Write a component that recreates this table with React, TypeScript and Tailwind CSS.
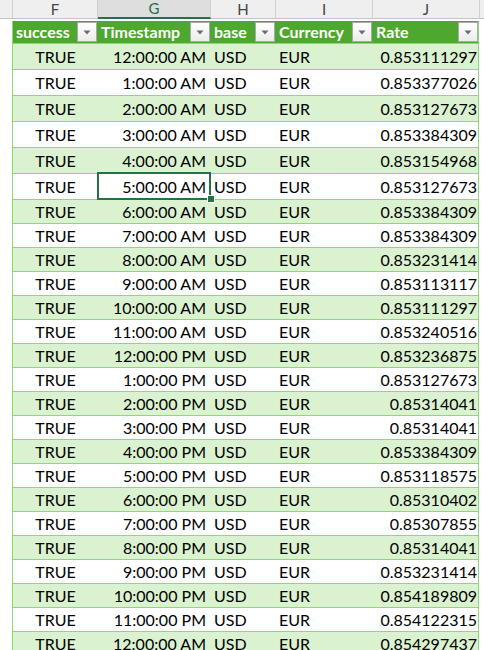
import React from "react";

const rows: [string, string][] = [
  ["12:00:00 AM", "0.853111297"],
  ["1:00:00 AM", "0.853377026"],
  ["2:00:00 AM", "0.853127673"],
  ["3:00:00 AM", "0.853384309"],
  ["4:00:00 AM", "0.853154968"],
  ["5:00:00 AM", "0.853127673"],
  ["6:00:00 AM", "0.853384309"],
  ["7:00:00 AM", "0.853384309"],
  ["8:00:00 AM", "0.853231414"],
  ["9:00:00 AM", "0.853113117"],
  ["10:00:00 AM", "0.853111297"],
  ["11:00:00 AM", "0.853240516"],
  ["12:00:00 PM", "0.853236875"],
  ["1:00:00 PM", "0.853127673"],
  ["2:00:00 PM", "0.85314041"],
  ["3:00:00 PM", "0.85314041"],
  ["4:00:00 PM", "0.853384309"],
  ["5:00:00 PM", "0.853118575"],
  ["6:00:00 PM", "0.85310402"],
  ["7:00:00 PM", "0.85307855"],
  ["8:00:00 PM", "0.85314041"],
  ["9:00:00 PM", "0.853231414"],
  ["10:00:00 PM", "0.854189809"],
  ["11:00:00 PM", "0.854122315"],
  ["12:00:00 AM", "0.854297437"],
];

function FilterButton() {
  return (
    <div className="w-[20px] h-[20px] shrink-0 flex items-center justify-center border border-[#a9a9a9] bg-gradient-to-b from-white to-[#ececec]">
      <svg width="8" height="5" viewBox="0 0 8 5">
        <path d="M0.5 0.5 L7.5 0.5 L4 4.5 Z" fill="#6b6b6b" />
      </svg>
    </div>
  );
}

function HeaderCell({ label, width }: { label: string; width: string }) {
  return (
    <div className={`${width} h-full flex items-center justify-between pl-[3px] pr-[1px]`}>
      <span className="text-white font-bold text-[16px] leading-none">{label}</span>
      <FilterButton />
    </div>
  );
}

export default function App() {
  return (
    <div
      className="w-[484px] h-[650px] overflow-hidden bg-white text-black"
      style={{ fontFamily: "Lato, 'Open Sans', sans-serif" }}
    >
      {/* column letters */}
      <div className="flex h-[19px] bg-[#efefef] border-b border-[#c4c4c4] text-[15px] text-[#444444] leading-none">
        <div className="w-[13px] border-r border-[#cfcfcf]" />
        <div className="w-[85px] border-r border-[#cfcfcf] flex items-center justify-center">F</div>
        <div className="w-[113px] border-r border-[#cfcfcf] flex items-center justify-center bg-[#dedede] text-[#1e6e43] border-b-2 border-b-[#217346] -mb-[1px]">G</div>
        <div className="w-[65px] border-r border-[#cfcfcf] flex items-center justify-center">H</div>
        <div className="w-[97px] border-r border-[#cfcfcf] flex items-center justify-center">I</div>
        <div className="w-[107px] border-r border-[#cfcfcf] flex items-center justify-center">J</div>
        <div className="flex-1" />
      </div>

      <div className="mt-[2px] ml-[12px] w-[467px] border-l border-r border-[#8ed973]">
        {/* table header */}
        <div className="flex h-[22px] bg-[#4ea72e]">
          <HeaderCell label="success" width="w-[85px]" />
          <HeaderCell label="Timestamp" width="w-[113px]" />
          <HeaderCell label="base" width="w-[65px]" />
          <HeaderCell label="Currency" width="w-[97px]" />
          <div className="w-[105px] h-full flex items-center justify-between pl-[3px]">
            <span className="text-white font-bold text-[16px] leading-none">Rate</span>
            <FilterButton />
          </div>
        </div>

        {rows.map(([ts, rate], i) => (
          <div
            key={i}
            className={`flex border-t border-[#8ed973] text-[16px] leading-none ${
              i < 6 ? "h-[26px]" : "h-[24px]"
            } ${i % 2 === 0 ? "bg-[#daf2d0]" : "bg-white"}`}
          >
            <div className="w-[85px] flex items-center justify-center pt-[1px]">TRUE</div>
            <div className="w-[113px] relative flex items-center justify-end pr-[5px] pt-[1px]">
              {ts}
              {i === 5 && (
                <>
                  <div className="absolute -top-[2px] -left-[1px] right-0 -bottom-[1px] border-2 border-[#217346]" />
                  <div className="absolute -right-[3px] -bottom-[3px] w-[6px] h-[6px] bg-[#217346] outline outline-1 outline-white" />
                </>
              )}
            </div>
            <div className="w-[65px] flex items-center pl-[3px] pt-[1px]">USD</div>
            <div className="w-[97px] flex items-center pl-[3px] pt-[1px]">EUR</div>
            <div className="w-[105px] flex items-center justify-end pr-[1px] pt-[1px]">{rate}</div>
          </div>
        ))}
      </div>
    </div>
  );
}
